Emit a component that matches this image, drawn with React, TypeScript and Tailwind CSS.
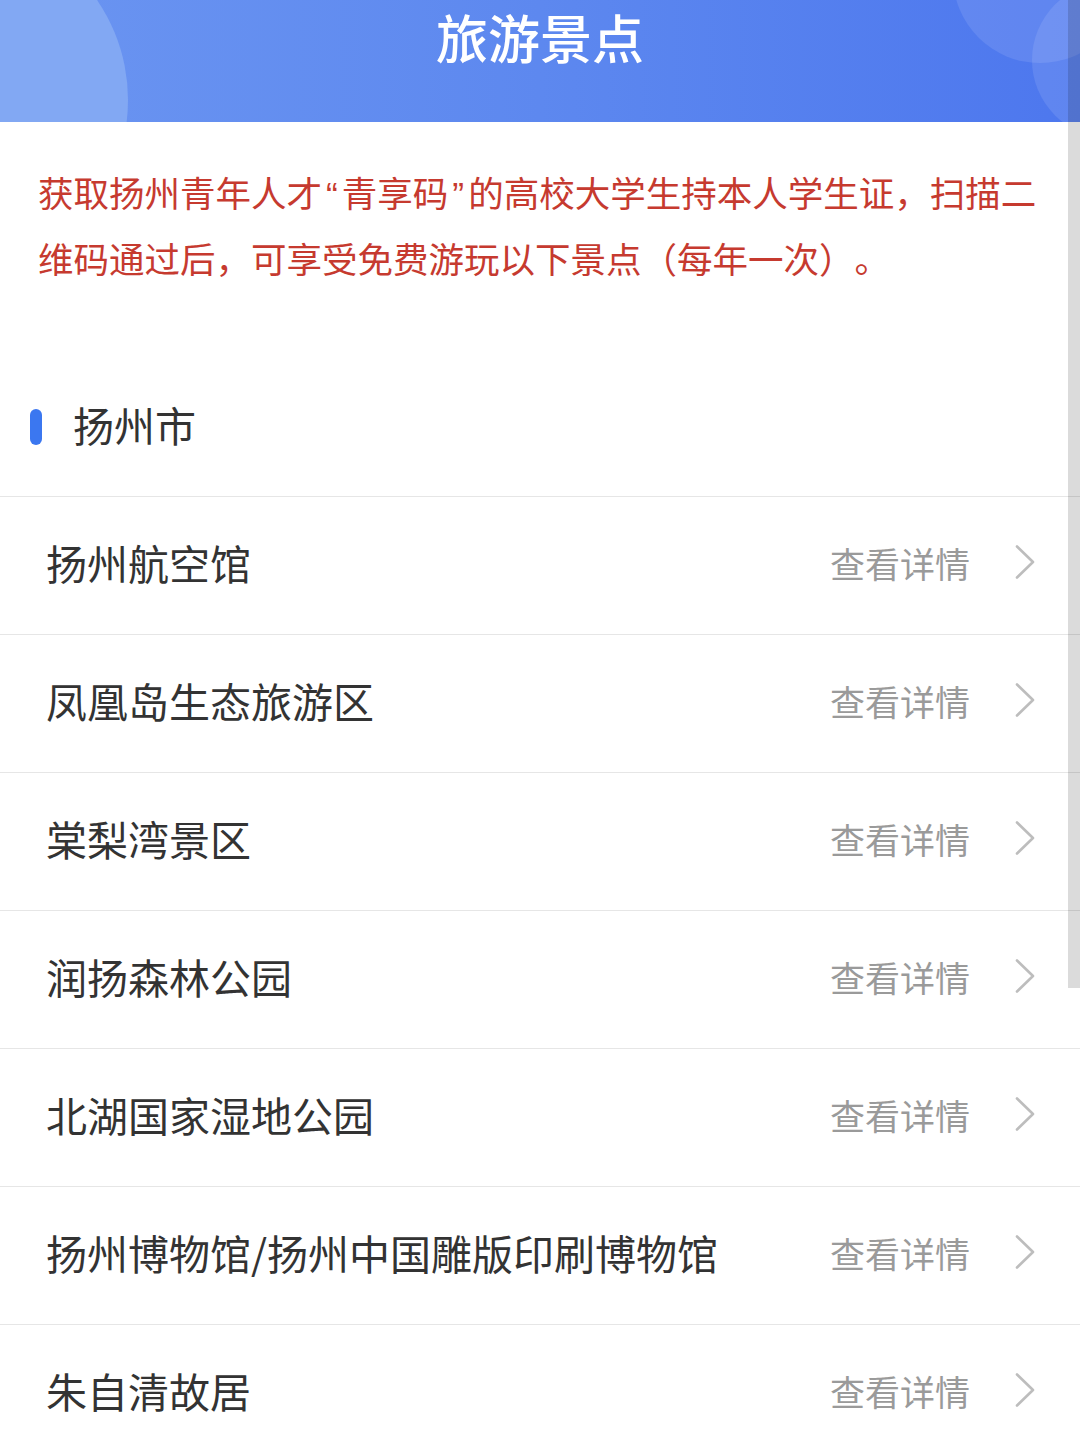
const spots = [
  "扬州航空馆",
  "凤凰岛生态旅游区",
  "棠梨湾景区",
  "润扬森林公园",
  "北湖国家湿地公园",
  "扬州博物馆/扬州中国雕版印刷博物馆",
  "朱自清故居",
];

function Chevron() {
  return (
    <svg width="20" height="34" viewBox="0 0 20 34" fill="none">
      <path d="M2 1.5 L18 17 L2 32.5" stroke="#bdbdbd" strokeWidth="2.6" strokeLinecap="round" strokeLinejoin="round" />
    </svg>
  );
}

function SpotRow({ name }: { name: string }) {
  return (
    <div className="flex h-[138px] items-center border-t border-[#e6e6e6] pb-[7px] pl-[46px] pr-[45px]">
      <span className="flex-1 text-[41px] leading-none text-[#333333]">{name}</span>
      <span className="text-[35px] leading-none text-[#9a9a9a]">查看详情</span>
      <span className="ml-[45px] flex items-center">
        <Chevron />
      </span>
    </div>
  );
}

function Quote({ ch }: { ch: string }) {
  return <span className="mx-[4px] font-['Liberation_Sans'] leading-none">{ch}</span>;
}

export default function App() {
  return (
    <div
      className="relative h-[1440px] w-[1080px] overflow-hidden bg-white"
      style={{ fontFamily: '"Noto Sans CJK SC", "Noto Sans", sans-serif' }}
    >
      {/* header */}
      <header className="relative h-[122px] overflow-hidden bg-gradient-to-r from-[#6b95f1] via-[#5d88ef] to-[#4d77ee]">
        <div className="absolute left-[-226px] top-[-77px] h-[354px] w-[354px] rounded-full bg-[#82a8f3]" />
        <div className="absolute left-[953px] top-[-111px] h-[174px] w-[174px] rounded-full bg-white/10" />
        <div className="absolute left-[1032px] top-[-18px] h-[156px] w-[156px] rounded-full bg-white/10" />
        <div className="relative flex justify-center pt-[11px]">
          <h1 className="text-[52px] font-medium leading-none text-white">旅游景点</h1>
        </div>
      </header>

      {/* notice */}
      <p className="h-[160px] whitespace-nowrap pl-[38px] pt-[37px] text-[35.5px] leading-[66px] text-[#c63a2f] [text-spacing-trim:space-all]">
        获取扬州青年人才<Quote ch="“" />青享码<Quote ch="”" />的高校大学生持本人学生证，扫描二
        <br />
        维码通过后，可享受免费游玩以下景点（每年一次）。
      </p>

      {/* city */}
      <div className="mt-[110px] flex h-[70px] items-center pl-[30px]">
        <span className="h-[36px] w-[12px] rounded-full bg-[#3b77f0]" />
        <span className="ml-[31px] -translate-y-[3px] text-[41px] leading-none text-[#333333]">扬州市</span>
      </div>
      <div className="mt-[34px]">
        {spots.map((s) => (
          <SpotRow key={s} name={s} />
        ))}
      </div>

      {/* scrollbar */}
      <div className="absolute right-0 top-0 h-[988px] w-[12px] bg-black/[0.14]" />
    </div>
  );
}
